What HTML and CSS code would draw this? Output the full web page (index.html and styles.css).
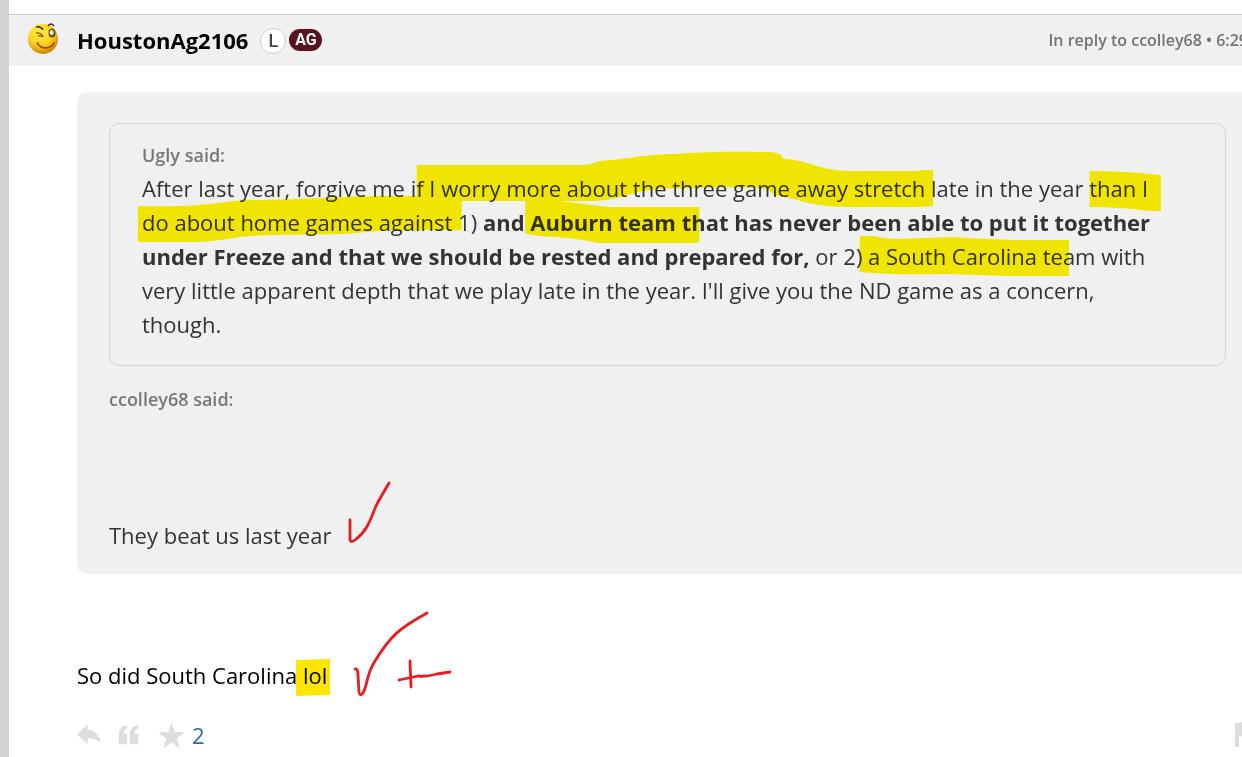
FILE: index.html
```html
<!DOCTYPE html>
<html lang="en">
<head>
<meta charset="utf-8">
<meta name="viewport" content="width=device-width, initial-scale=1">
<title>Forum thread</title>
<link rel="stylesheet" href="styles.css">
</head>
<body>
<main class="page">
  <article class="post">
    <header class="post-header">
      <svg class="avatar" viewBox="0 0 32 32" role="img" aria-label="Winking smiley">
        <defs>
          <radialGradient id="face" cx="42%" cy="30%" r="68%">
            <stop offset="0" stop-color="#fff04a"/>
            <stop offset=".6" stop-color="#fbd21c"/>
            <stop offset="1" stop-color="#c98a08"/>
          </radialGradient>
        </defs>
        <circle cx="16" cy="16" r="15" fill="url(#face)"/>
        <path d="M9 4q5-1 7 3" fill="none" stroke="#4d3008" stroke-width="1.6"/>
        <path d="M9 10q4-1 7 3q-4 1-5-1" fill="none" stroke="#8a5c08" stroke-width="1.3"/>
        <ellipse cx="25" cy="10" rx="3.5" ry="4.5" fill="#7a4a08"/>
        <ellipse cx="24.6" cy="9.5" rx="2" ry="2.5" fill="#fff"/>
        <path d="M21 3q3-4 6 0" fill="none" stroke="#5d2525" stroke-width="1.5"/>
        <path d="M10 20q5 7 13 4q4-2 4-5" fill="none" stroke="#b0480c" stroke-width="1.6"/>
        <path d="M10 22l1-3" stroke="#b0480c" stroke-width="1.3"/>
      </svg>
      <h2 class="author">HoustonAg2106</h2>
      <span class="badge badge-letter">L</span>
      <span class="badge badge-ag">AG</span>
      <p class="meta">In reply to ccolley68 • 6:29</p>
    </header>

    <div class="post-body">
      <blockquote class="quote">
        <blockquote class="quote-inner">
          <p class="said">Ugly said:</p>
          <p class="quote-text">After last year, forgive me if I worry more about the three game away stretch late in the year than I<br>
            do about home games against 1) <b>and Auburn team that has never been able to put it together<br>
            under Freeze and that we should be rested and prepared for,</b> or 2) a South Carolina team with<br>
            very little apparent depth that we play late in the year. I'll give you the ND game as a concern,<br>
            though.</p>
        </blockquote>
        <p class="said said-outer">ccolley68 said:</p>
        <p class="quote-reply">They beat us last year</p>
      </blockquote>
      <p class="reply">So did South Carolina lol</p>
      <footer class="actions">
        <button class="action" type="button" aria-label="Reply">
          <svg width="25" height="23" viewBox="0 0 26 24"><path d="M0 11L11 0v6q11 0 14 14q-6-6-14-5v6z"/></svg>
        </button>
        <button class="action action-quote" type="button" aria-label="Quote">
          <svg width="24" height="22" viewBox="0 0 24 24"><path d="M10 1v4q-4 1-4 6h4v11H1V11Q1 2 10 1zM22 1v4q-4 1-4 6h4v11h-9V11q0-9 9-10z"/></svg>
        </button>
        <button class="action action-star" type="button" aria-label="Star">
          <svg width="27" height="27" viewBox="0 0 28 27"><path d="M14 0l3.3 10H28l-8.600 6.500L22.700 27L14 20.600L5.300 27l3.300-10.500L0 10h10.700z"/></svg>
        </button>
        <a class="stars" href="#stars">2</a>
        <button class="action action-flag" type="button" aria-label="Flag">
          <svg width="24" height="26" viewBox="0 0 24 26"><path d="M0 1h4q5-2 10 1t10 0v13q-5 2-10 0t-10 0v10H0z"/></svg>
        </button>
      </footer>
    </div>

    <svg class="ink highlighter" width="1242" height="757" viewBox="0 0 1242 757" aria-hidden="true">
      <g fill="#fff400" transform="translate(3 0) scale(.978 1)">
        <path d="M423 165H595C607 163 609 160 623 160C659 156 663 154 690 154C730 151 755 152 784 152Q797 153 798 159C818 160 826 165 840 168Q852 171 866 171H936L938 170H951V206L938 207H860C828 206 818 201 800 197Q788 196 783 190Q779 188 770 188C731 186 704 188 671 189C642 191 633 200 604 201H423z"/>
        <path d="M1111 171Q1147 171 1184 175V211H1172Q1143 207 1111 207z"/>
        <path d="M138 206C208 208 222 201 251 200C310 200 350 196 389 196H469V230H394L350 234C310 235 270 234 242 237Q220 241 201 242H138z"/>
        <path d="M534 201H570L618 207H712V242L706 243H609Q584 238 565 237Q541 236 534 233z"/>
        <path d="M876 236H891Q897 238 912 239L973 237Q1009 240 1050 240H1090V276H1030L965 274Q916 275 890 273L876 272z"/>
      </g>
      <path fill="#ffe600" d="M296 660L330 659V695L296 696z"/>
    </svg>
    <svg class="ink" width="1242" height="757" viewBox="0 0 1242 757" aria-hidden="true">
      <g fill="none" stroke="#e81c20" stroke-width="2.800" stroke-linecap="round" stroke-linejoin="round">
        <path d="M350 520V540Q351 543 355 540C370 529 371 515 378 502L389 483"/>
        <path d="M355 669Q358 668 358 675L359 692Q360 697 363 693C368 684 366 675 375 661C391 635 400 628 427 613"/>
        <path d="M399 680L418 676Q425 677 437 674L450 672M410 661L411 687"/>
      </g>
    </svg>
  </article>
</main>
</body>
</html>
```
FILE: styles.css
```css
* { box-sizing: border-box; }

body {
  margin: 0;
  font-family: "Open Sans", "Noto Sans", sans-serif;
  background: #fff;
  color: #000;
  overflow: hidden;
}

h2, p, blockquote { margin: 0; }

.page {
  min-height: 100vh;
  padding-top: 14px;
  border-left: 9px solid #d4d4d4;
}

.post { border-top: 1px solid #ccc; }

.post-header {
  display: flex;
  align-items: center;
  height: 51px;
  padding-left: 18px;
  background: #f0f0f0;
}

.avatar {
  width: 32px;
  height: 32px;
  margin: 0 18px 4px 0;
}

.author {
  padding-bottom: 2px;
  font-size: 22px;
  font-weight: 700;
  line-height: 30px;
}

.badge {
  display: flex;
  align-items: center;
  justify-content: center;
  font-family: Roboto, sans-serif;
}

.badge-letter {
  width: 26px;
  height: 26px;
  margin-left: 12px;
  border: 1px solid #ccc;
  border-radius: 50%;
  background: #fff;
  color: #444;
  font-size: 18px;
  font-weight: 500;
}

.badge-ag {
  width: 33px;
  height: 22px;
  margin: 0 0 2px 3px;
  border-radius: 11px;
  background: #5a121e;
  color: #fff;
  font-size: 16px;
  font-weight: 700;
}

.meta {
  flex: 0 0 194px;
  margin: 0 -6px 0 auto;
  padding-bottom: 2px;
  color: #737373;
  font-size: 16px;
  font-weight: 600;
  line-height: 24px;
  white-space: nowrap;
}

.post-body { padding: 26px 0 0 68px; }

.quote {
  margin-right: -16px;
  padding: 31px 32px 22px;
  border-radius: 10px;
  background: #f0f0f0;
  color: #333;
}

.quote-inner {
  padding: 17px 32px 24px;
  border: 1px solid #d4d4d4;
  border-radius: 10px;
}

.said {
  padding-bottom: 2px;
  color: #777;
  font-size: 18px;
  font-weight: 600;
  line-height: 28px;
}

.said-outer { margin-top: 19px; }

.quote-text {
  font-size: 22px;
  line-height: 34px;
}

.quote-reply {
  margin-top: 103px;
  font-size: 22px;
  line-height: 34px;
}

.reply {
  margin-top: 84px;
  font-size: 22px;
  line-height: 34px;
}

.actions {
  display: flex;
  align-items: center;
  margin: 27px -17px 0 0;
}

.action {
  display: flex;
  padding: 0;
  border: 0;
  background: none;
  cursor: pointer;
}

.action svg { fill: #ddd; }

.action-quote { margin-left: 15px; }

.action-star { margin-left: 17px; }

.stars {
  margin-left: 7px;
  color: #2a6bb0;
  font-size: 22px;
  line-height: 32px;
  text-decoration: none;
}

.action-flag { margin-left: auto; }

/* Pen marks drawn over the post */
.ink {
  position: absolute;
  top: 0;
  left: 0;
  pointer-events: none;
}

.highlighter { mix-blend-mode: multiply; }
```
